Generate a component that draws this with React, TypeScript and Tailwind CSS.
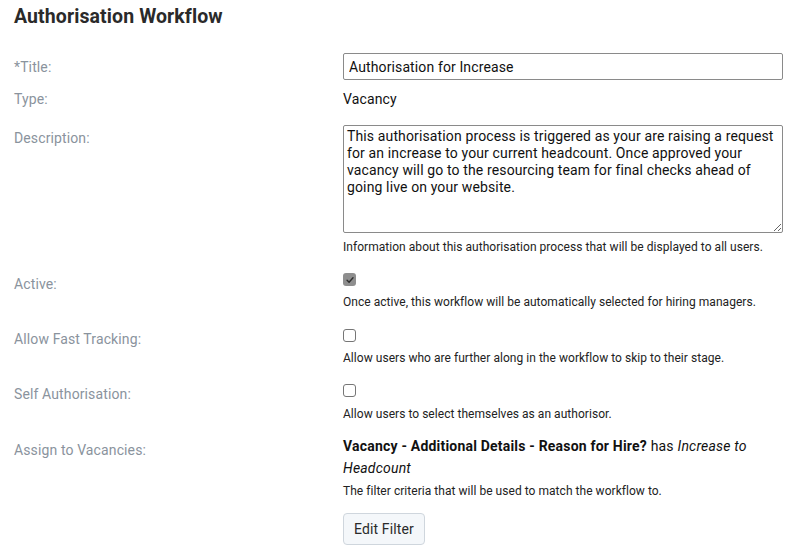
import React from 'react';

const Label: React.FC<{ children: React.ReactNode; className?: string }> = ({ children, className = '' }) => (
  <div className={`text-[14px] leading-[20px] text-[#8a939d] ${className}`}>{children}</div>
);

const Help: React.FC<{ children: React.ReactNode; className?: string }> = ({ children, className = '' }) => (
  <p className={`text-[12px] leading-[16px] tracking-[0.04px] text-[#222] ${className}`}>{children}</p>
);

const Checkbox: React.FC<{ checked?: boolean }> = ({ checked }) =>
  checked ? (
    <span className="flex h-[13px] w-[13px] items-center justify-center rounded-[3px] bg-[#8e8e8e]">
      <svg viewBox="0 0 12 12" className="h-[10px] w-[10px]" fill="none">
        <path d="M2.5 6.3 L4.9 8.6 L9.6 3.4" stroke="#2e2e2e" strokeWidth="1.7" strokeLinecap="round" strokeLinejoin="round" />
      </svg>
    </span>
  ) : (
    <span className="block h-[13px] w-[13px] rounded-[3px] border border-[#767676] bg-white" />
  );

export default function App() {
  return (
    <div
      className="min-h-screen bg-white px-[14px] pt-[5px] tracking-[0.12px] text-[#111]"
      style={{ fontFamily: 'Roboto, "Liberation Sans", sans-serif' }}
    >
      <h1 className="text-[19.5px] font-bold leading-[24px] tracking-[0.1px] text-[#2a2a2a]">Authorisation Workflow</h1>

      <div className="mt-[24px] grid grid-cols-[329px_440px]">
        {/* Title */}
        <Label className="pt-[4px]">*Title:</Label>
        <input
          readOnly
          value="Authorisation for Increase"
          className="h-[27px] w-full rounded-[2px] border border-[#8a8a8a] px-[5px] text-[14px] tracking-[0.12px] text-[#111] outline-none"
        />

        {/* Type */}
        <Label className="mt-[9px]">Type:</Label>
        <div className="mt-[9px] text-[14px] leading-[20px]">Vacancy</div>

        {/* Description */}
        <Label className="mt-[19px]">Description:</Label>
        <div className="mt-[16px]">
          <textarea
            readOnly
            value="This authorisation process is triggered as your are raising a request for an increase to your current headcount. Once approved your vacancy will go to the resourcing team for final checks ahead of going live on your website."
            className="block h-[108px] w-full rounded-[2px] border border-[#8a8a8a] px-[3px] py-[2px] text-[14px] leading-[17px] tracking-[0.13px] text-[#111] outline-none"
          />
          <Help className="mt-[6px]">Information about this authorisation process that will be displayed to all users.</Help>
        </div>

        {/* Active */}
        <Label className="mt-[19px]">Active:</Label>
        <div className="mt-[18px]">
          <Checkbox checked />
          <Help className="mt-[8px]">Once active, this workflow will be automatically selected for hiring managers.</Help>
        </div>

        {/* Fast tracking */}
        <Label className="mt-[19px]">Allow Fast Tracking:</Label>
        <div className="mt-[19px]">
          <Checkbox />
          <Help className="mt-[8px]">Allow users who are further along in the workflow to skip to their stage.</Help>
        </div>

        {/* Self authorisation */}
        <Label className="mt-[18px]">Self Authorisation:</Label>
        <div className="mt-[18px]">
          <Checkbox />
          <Help className="mt-[9px]">Allow users to select themselves as an authorisor.</Help>
        </div>

        {/* Vacancies */}
        <Label className="mt-[18px]">Assign to Vacancies:</Label>
        <div className="mt-[13px]">
          <p className="text-[14px] leading-[22px] tracking-[0.2px]">
            <span className="font-bold">Vacancy - Additional Details - Reason for Hire?</span> has{' '}
            <em>Increase to Headcount</em>
          </p>
          <Help className="mt-[4px]">The filter criteria that will be used to match the workflow to.</Help>
          <button className="mt-[14px] h-[32px] rounded-[4px] border border-[#cfd6dd] bg-[#f4f7fa] px-[10px] text-[14px] text-[#2a2a2a]">
            Edit Filter
          </button>
        </div>
      </div>
    </div>
  );
}
